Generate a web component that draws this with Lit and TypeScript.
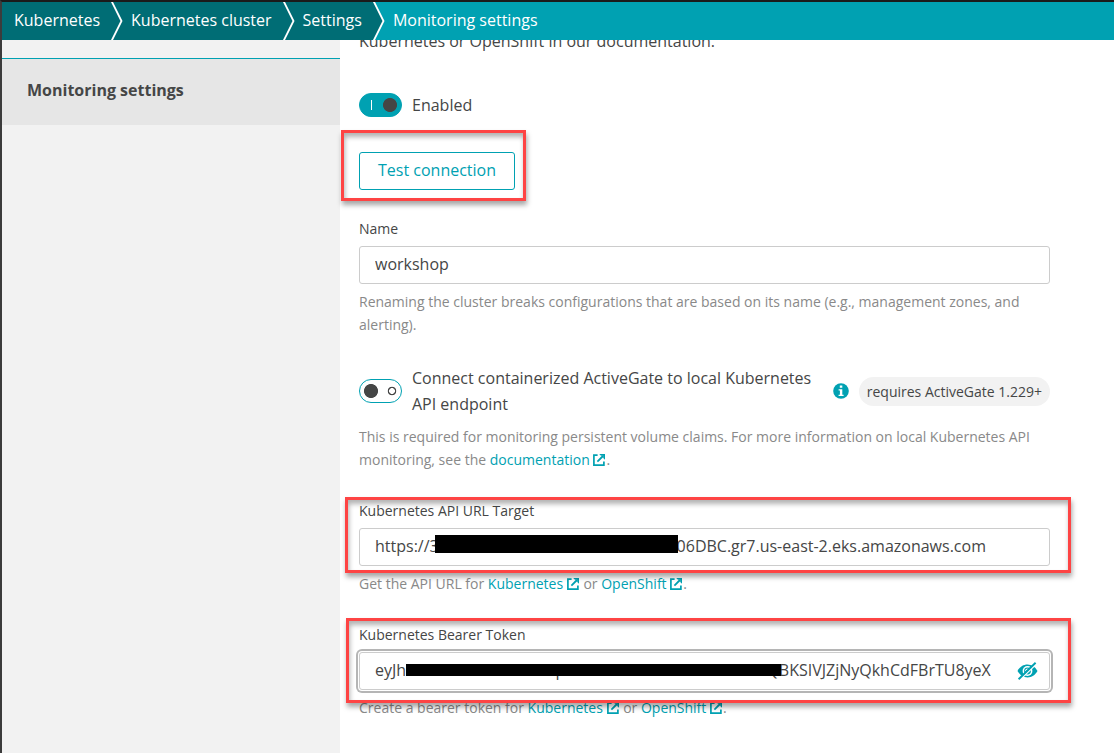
import { LitElement, html, css, svg } from "lit";
import { customElement, property, state } from "lit/decorators.js";

const externalIcon = html`<svg class="ext" viewBox="0 0 12 12" aria-hidden="true">
  <path d="M4.6 1.1H0.9V11.1H10.9V7.4" fill="none" stroke="currentColor" stroke-width="1.7" />
  <path d="M4.4 7.6L10 2" fill="none" stroke="currentColor" stroke-width="1.8" />
  <path d="M6.2 0H12V5.8L10.2 4V1.8H8Z" fill="currentColor" />
</svg>`;

const chevron = html`<svg class="chevron" viewBox="0 0 12 38" aria-hidden="true">
  <path class="after" d="M0 0L11 19L0 38H12V0Z" />
  <path d="M0.5 -1L10.5 19L0.5 39" fill="none" stroke="#fff" stroke-width="1.8" />
</svg>`;

const eyeSlash = svg`
  <path d="M0.5 9C3 4.6 6.6 2.6 10.5 2.6C14.6 2.6 18 4.6 20.5 9C18 13.4 14.6 15.4 10.5 15.4C6.6 15.4 3 13.4 0.5 9Z" fill="#00a1b2"/>
  <circle cx="10.5" cy="9" r="4.9" fill="#fff"/>
  <circle cx="10.5" cy="9" r="3.4" fill="#00a1b2"/>
  <path d="M8.6 9.2A2 2 0 0 1 10.7 7.1" fill="none" stroke="#fff" stroke-width="1.1"/>
  <path d="M3 17.6L19.6 1.6" stroke="#fff" stroke-width="1.6"/>
  <path d="M1.6 17.2L18.6 0.8" stroke="#00a1b2" stroke-width="1.9"/>`;

@customElement("toggle-switch")
export class ToggleSwitch extends LitElement {
  @property({ type: Boolean }) checked = false;
  @property() label = "";

  static styles = css`
    :host { display: block; flex: none; width: 43px; height: 24px; }
    .switch {
      appearance: none; display: block; box-sizing: border-box; margin: 0;
      width: 43px; height: 24px; border: 1px solid #00a1b2; border-radius: 12px;
      background:
        radial-gradient(circle at 11px 11px, #454646 6.6px, transparent 7.4px),
        radial-gradient(circle at 32px 11px, transparent 2.6px, #454646 3.2px, #454646 4px, transparent 4.6px),
        #fff;
      cursor: pointer;
    }
    .switch:checked {
      background:
        radial-gradient(circle at 30px 11px, #454646 6.6px, transparent 7.4px),
        linear-gradient(#fff, #fff) 11px 6px / 1px 10px no-repeat,
        #00a1b2;
    }
  `;

  render() {
    return html`<input class="switch" type="checkbox" role="switch" aria-label=${this.label}
      .checked=${this.checked}
      @change=${(e: Event) => (this.checked = (e.target as HTMLInputElement).checked)} />`;
  }
}

@customElement("app-root")
export class AppRoot extends LitElement {
  @state() private clusterName = "workshop";

  static styles = css`
    :host {
      display: flex; flex-direction: column; box-sizing: border-box; min-height: 100vh;
      border-top: 2px solid #1b1b1b; border-left: 2px solid #3c3c3c;
      background: #fff; color: #454646;
      font-family: "Open Sans", "Noto Sans", sans-serif; font-size: 16px; line-height: 26px;
    }
    a { color: #00a1b2; text-decoration: none; }
    .crumbs { position: relative; z-index: 1; display: flex; height: 38px; background: #00a1b2; }
    .crumb {
      display: flex; gap: 11px; padding-left: 8px;
      background: #006d75; color: #fff; line-height: 36px; white-space: nowrap;
    }
    .crumb:first-child { padding-left: 12px; }
    .crumb.current { background: none; }
    .chevron { display: block; width: 12px; height: 38px; }
    .after { fill: #006d75; }
    .last .after { fill: #00a1b2; }
    .layout { display: flex; flex: 1; }
    .sidebar { flex: none; width: 338px; background: #f2f2f2; }
    .side-item {
      display: block; margin-top: 18px; padding: 18px 25px 22px; border-top: 1px solid #00a1b2;
      background: #e6e6e6; color: #454646; font-weight: 700;
    }
    .content { flex: 1; min-width: 0; padding: 0 64px 32px 19px; }
    .intro { margin: -12px 0 0; }
    .enabled { display: flex; align-items: center; gap: 10px; margin-top: 38px; }
    .row { display: flex; align-items: center; gap: 10px; margin: 28px 0 8px; }
    .row-text { flex: 1; }
    .info { flex: none; width: 16px; height: 16px; }
    .badge {
      flex: none; padding: 3px 8px; border-radius: 15px; background: #f2f2f2;
      font-size: 14px; line-height: 23px; white-space: nowrap;
    }
    .marked { position: relative; }
    .mark {
      position: absolute; pointer-events: none; border: 3px solid #fe4444;
      box-shadow: 1px 4px 5px rgba(0, 0, 0, 0.35), inset 1px 4px 5px rgba(0, 0, 0, 0.3);
    }
    .mark.tight { inset: -22px -11px -11px -18px; }
    .mark.url { inset: -4px -21px -7px -14px; }
    .mark.token { inset: -7px -21px -13px -13px; }
    .test { width: fit-content; margin-top: 34px; }
    .button {
      display: block; height: 38px; padding: 0 18px 2px; border: 1px solid #00a1b2; border-radius: 3px;
      background: #fff; color: #00a1b2; font: inherit; cursor: pointer;
    }
    .field { margin-top: 29px; }
    .label { display: block; font-size: 14px; line-height: 20px; }
    .box { position: relative; display: flex; margin-top: 7px; height: 38px; box-sizing: border-box;
      border: 1px solid #ccc; border-radius: 3px; background: #fff; }
    .box.focused { box-shadow: 0 0 0 1px #fff, 0 0 0 3px #b5b5b5; }
    .input {
      flex: 1; min-width: 0; margin: 0 15px; padding: 0 0 2px; border: 0; outline: 0; background: none;
      color: #454646; font: inherit;
    }
    .redact { position: absolute; background: #000; }
    .redact.url { left: 75px; top: 6px; width: 243px; height: 18px; }
    .redact.token { left: 46px; top: 11px; width: 375px; height: 12px; }
    .reveal {
      flex: none; display: flex; align-items: center; margin: 0; padding: 0 11px 0 10px; border: 0;
      background: none; cursor: pointer;
    }
    .eye { width: 21px; height: 18px; }
    .help { margin: 6px 0 0; padding-bottom: 1px; color: #898989; font-size: 14px; line-height: 23px; }
    .ext { width: 12px; height: 12px; margin-right: 1px; vertical-align: -1px; }
  `;

  private crumb(text: string, last = false) {
    return html`<a class="crumb ${last ? "last" : ""}" href="#">${text}${chevron}</a>`;
  }

  private docLink(text: string) {
    return html`<a href="#">${text} ${externalIcon}</a>`;
  }

  render() {
    return html`
      <nav class="crumbs" aria-label="Breadcrumb">
        ${this.crumb("Kubernetes")}${this.crumb("Kubernetes cluster")}${this.crumb("Settings", true)}
        <a class="crumb current" href="#" aria-current="page">Monitoring settings</a>
      </nav>
      <div class="layout">
        <aside class="sidebar"><a class="side-item" href="#">Monitoring settings</a></aside>
        <main class="content">
          <p class="intro">Kubernetes or OpenShift in our documentation.</p>
          <div class="enabled"><toggle-switch checked label="Enabled"></toggle-switch><span>Enabled</span></div>
          <div class="test marked">
            <button class="button" type="button">Test connection</button>
            <div class="mark tight"></div>
          </div>

          <div class="field">
            <label class="label" for="name">Name</label>
            <div class="box">
              <input class="input" id="name" type="text" .value=${this.clusterName}
                @input=${(e: Event) => (this.clusterName = (e.target as HTMLInputElement).value)} />
            </div>
          </div>
          <p class="help">Renaming the cluster breaks configurations that are based on its name (e.g., management zones, and alerting).</p>

          <div class="row">
            <toggle-switch label="Connect containerized ActiveGate to local Kubernetes API endpoint"></toggle-switch>
            <span class="row-text">Connect containerized ActiveGate to local Kubernetes API endpoint</span>
            <svg class="info" viewBox="0 0 16 16" role="img" aria-label="Info">
              <circle cx="8" cy="8" r="7.8" fill="#00a1b2" />
              <path d="M6.8 2.4H9.3V4.8H6.8ZM5.6 6.2H9.3V11.8H10.6V13H5.6V11.8H6.9V7.4H5.6Z" fill="#fff" />
            </svg>
            <span class="badge">requires ActiveGate 1.229+</span>
          </div>
          <p class="help">This is required for monitoring persistent volume claims. For more information on local Kubernetes API monitoring, see the ${this.docLink("documentation")}.</p>

          <div class="field marked">
            <label class="label" for="url">Kubernetes API URL Target</label>
            <div class="box">
              <input class="input" id="url" type="text" value="https://30000000000000000000000000006DBC.gr7.us-east-2.eks.amazonaws.com" />
              <div class="redact url"></div>
            </div>
            <div class="mark url"></div>
          </div>
          <p class="help">Get the API URL for ${this.docLink("Kubernetes")} or ${this.docLink("OpenShift")}.</p>

          <div class="field marked">
            <label class="label" for="token">Kubernetes Bearer Token</label>
            <div class="box focused">
              <input class="input" id="token" type="text" value="eyJhdddddxxxxxxxxxxxxpxxxxxxxxxxxxxxxxxxxxxxxxQBKSIVJZjNyQkhCdFBrTU8yeX" />
              <button class="reveal" type="button" aria-label="Hide token">
                <svg class="eye" viewBox="0 0 21 18" aria-hidden="true">${eyeSlash}</svg>
              </button>
              <div class="redact token"></div>
            </div>
            <div class="mark token"></div>
          </div>
          <p class="help">Create a bearer token for ${this.docLink("Kubernetes")} or ${this.docLink("OpenShift")}.</p>
        </main>
      </div>
    `;
  }
}
